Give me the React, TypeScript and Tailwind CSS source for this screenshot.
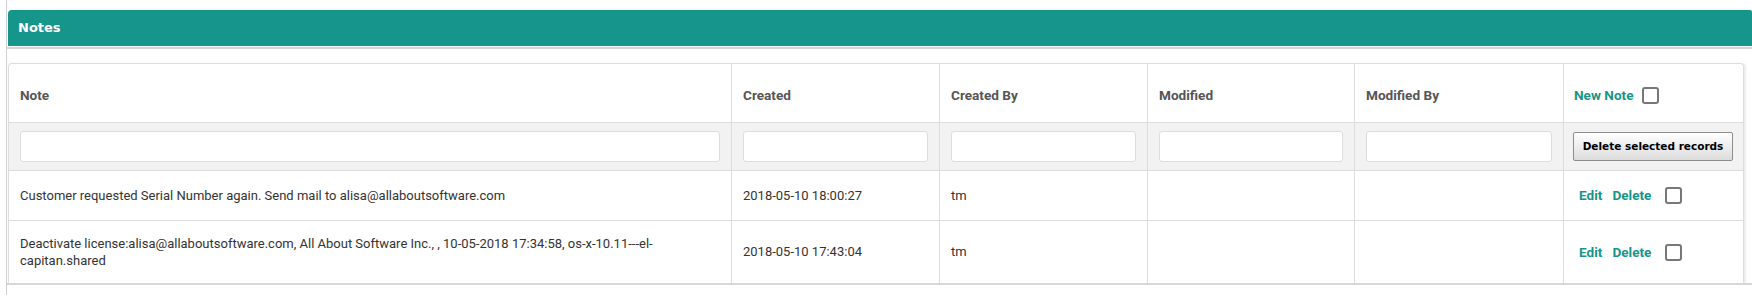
import React from "react";

const teal = "text-[#17958a]";

function Checkbox() {
  return <span className="inline-block w-[17px] h-[17px] border-2 border-[#777] rounded-[3px] bg-white" />;
}

function FilterInput() {
  return <div className="mx-[11px] h-[31px] bg-white border border-[#ddd] rounded-[3px]" />;
}

const cols = "grid grid-cols-[722px_208px_208px_207px_209px_180px]";
const cell = "flex items-center border-l border-[#ddd]";

export default function App() {
  const font = { fontFamily: "Roboto, 'Liberation Sans', sans-serif" };
  return (
    <div className="w-[1752px] h-[295px] bg-white overflow-hidden pl-[6px]" style={font}>
      <div className="h-full border-l border-[#cfcfcf]">
        <div className="pt-[10px] pl-[1px]">
          <div className="h-[36px] bg-[#16958a] rounded-tl-[4px] rounded-tr-[2px] flex items-center pl-[10px]">
            <span className="text-white font-bold text-[13px]" style={{ fontFamily: "'DejaVu Sans', Verdana, sans-serif" }}>
              Notes
            </span>
          </div>
        </div>
        <div className="mt-[1px] h-[2px] bg-[#d6d6d6]" />
        <div className="mt-[14px] ml-[1px] w-[1736px] border-t border-l border-r border-[#ddd] rounded-t-[4px] shadow-[2px_0_2px_rgba(0,0,0,0.08)] text-[13px]">
          {/* header row */}
          <div className={`${cols} h-[59px] border-b border-[#ddd] font-bold text-[#555] text-[13.6px]`}>
            <div className="flex items-center pl-[11px] pt-[5px]">Note</div>
            <div className={`${cell} pl-[11px] pt-[5px]`}>Created</div>
            <div className={`${cell} pl-[11px] pt-[5px]`}>Created By</div>
            <div className={`${cell} pl-[11px] pt-[5px]`}>Modified</div>
            <div className={`${cell} pl-[11px] pt-[5px]`}>Modified By</div>
            <div className={`${cell} pl-[10px] pt-[4px] gap-[8px]`}>
              <span className={teal}>New Note</span>
              <Checkbox />
            </div>
          </div>
          {/* filter row */}
          <div className={`${cols} h-[48px] border-b border-[#ddd] bg-[#f2f2f2]`}>
            <div className="flex flex-col justify-center"><FilterInput /></div>
            <div className="border-l border-[#ddd] flex flex-col justify-center"><FilterInput /></div>
            <div className="border-l border-[#ddd] flex flex-col justify-center"><FilterInput /></div>
            <div className="border-l border-[#ddd] flex flex-col justify-center"><FilterInput /></div>
            <div className="border-l border-[#ddd] flex flex-col justify-center"><FilterInput /></div>
            <div className={`${cell} pl-[9px]`}>
              <button
                className="w-[160px] h-[29px] border border-[#8c8c8c] rounded-[2px] bg-gradient-to-b from-white to-[#dcdcdc] text-black font-bold text-[10.5px] flex items-center justify-center"
                style={{ fontFamily: "'DejaVu Sans', Verdana, sans-serif" }}
              >
                Delete selected records
              </button>
            </div>
          </div>
          {/* row 1 */}
          <div className={`${cols} h-[50px] border-b border-[#ddd] text-[#333]`}>
            <div className="flex items-center pl-[11px]">Customer requested Serial Number again. Send mail to alisa@allaboutsoftware.com</div>
            <div className={`${cell} pl-[11px]`}>2018-05-10 18:00:27</div>
            <div className={`${cell} pl-[11px]`}>tm</div>
            <div className={cell}></div>
            <div className={cell}></div>
            <div className={`${cell} pl-[15px] font-bold text-[13.6px]`}>
              <span className={teal}>Edit</span>
              <span className={`${teal} ml-[10px]`}>Delete</span>
              <span className="ml-[14px] flex"><Checkbox /></span>
            </div>
          </div>
          {/* row 2 */}
          <div className={`${cols} h-[62px] text-[#333]`}>
            <div className="flex flex-col justify-center pl-[11px] leading-[17px]">
              <span className="whitespace-nowrap">Deactivate license:alisa@allaboutsoftware.com, All About Software Inc., , 10-05-2018 17:34:58, os-x-10.11---el-</span>
              <span>capitan.shared</span>
            </div>
            <div className={`${cell} pl-[11px]`}>2018-05-10 17:43:04</div>
            <div className={`${cell} pl-[11px]`}>tm</div>
            <div className={cell}></div>
            <div className={cell}></div>
            <div className={`${cell} pl-[15px] font-bold text-[13.6px]`}>
              <span className={teal}>Edit</span>
              <span className={`${teal} ml-[10px]`}>Delete</span>
              <span className="ml-[14px] flex"><Checkbox /></span>
            </div>
          </div>
        </div>
        <div className="h-[2px] bg-[#d6d6d6]" />
      </div>
    </div>
  );
}
